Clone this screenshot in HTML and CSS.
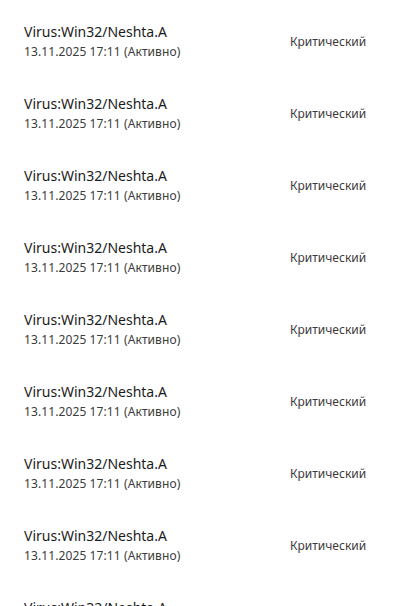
FILE: index.html
```html
<!DOCTYPE html>
<html lang="ru">
<head>
<meta charset="utf-8">
<link rel="stylesheet" href="styles.css">
</head>
<body>
<ul class="list">
  <li class="row"><div class="info"><div class="name">Virus:Win32/Neshta.A</div><div class="date">13.11.2025 17:11 (Активно)</div></div><div class="level">Критический</div></li>
  <li class="row"><div class="info"><div class="name">Virus:Win32/Neshta.A</div><div class="date">13.11.2025 17:11 (Активно)</div></div><div class="level">Критический</div></li>
  <li class="row"><div class="info"><div class="name">Virus:Win32/Neshta.A</div><div class="date">13.11.2025 17:11 (Активно)</div></div><div class="level">Критический</div></li>
  <li class="row"><div class="info"><div class="name">Virus:Win32/Neshta.A</div><div class="date">13.11.2025 17:11 (Активно)</div></div><div class="level">Критический</div></li>
  <li class="row"><div class="info"><div class="name">Virus:Win32/Neshta.A</div><div class="date">13.11.2025 17:11 (Активно)</div></div><div class="level">Критический</div></li>
  <li class="row"><div class="info"><div class="name">Virus:Win32/Neshta.A</div><div class="date">13.11.2025 17:11 (Активно)</div></div><div class="level">Критический</div></li>
  <li class="row"><div class="info"><div class="name">Virus:Win32/Neshta.A</div><div class="date">13.11.2025 17:11 (Активно)</div></div><div class="level">Критический</div></li>
  <li class="row"><div class="info"><div class="name">Virus:Win32/Neshta.A</div><div class="date">13.11.2025 17:11 (Активно)</div></div><div class="level">Критический</div></li>
  <li class="row"><div class="info"><div class="name">Virus:Win32/Neshta.A</div><div class="date">13.11.2025 17:11 (Активно)</div></div><div class="level">Критический</div></li>
</ul>
</body>
</html>
```
FILE: styles.css
```css
html, body {
  margin: 0;
  padding: 0;
  background: #ffffff;
  overflow: hidden;
}
body {
  font-family: "Noto Sans", "Open Sans", sans-serif;
  color: #1b1b1b;
}
.list {
  list-style: none;
  margin: 0;
  padding: 5px 0 0 0;
}
.row {
  height: 72px;
  display: grid;
  grid-template-columns: 266px 1fr;
  align-items: center;
  padding-left: 24px;
}
.info {
  display: flex;
  flex-direction: column;
}
.name {
  font-size: 14px;
  line-height: 20px;
  color: #1b1b1b;
}
.date {
  margin-top: 1px;
  font-size: 12px;
  line-height: 18px;
  letter-spacing: 0.1px;
  color: #3b3b3b;
}
.level {
  font-size: 12px;
  line-height: 16px;
  color: #3b3b3b;
  padding-top: 1px;
}
```
